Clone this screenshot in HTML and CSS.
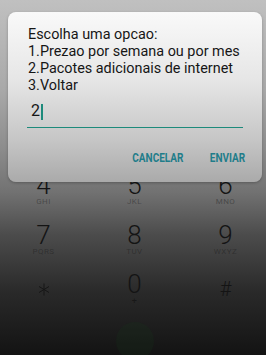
FILE: index.html
```html
<!DOCTYPE html>
<html lang="pt">
<head>
    <meta charset="UTF-8">
    <meta name="viewport" content="width=device-width, initial-scale=1.0">
    <title>USSD</title>
    <link rel="stylesheet" href="styles.css">
</head>
<body>
    <div class="screen">
        <div class="keypad">
            <div class="key"><div class="digit">4</div><div class="letters">GHI</div></div>
            <div class="key"><div class="digit">5</div><div class="letters">JKL</div></div>
            <div class="key"><div class="digit">6</div><div class="letters">MNO</div></div>
            <div class="key"><div class="digit">7</div><div class="letters">PQRS</div></div>
            <div class="key"><div class="digit">8</div><div class="letters">TUV</div></div>
            <div class="key"><div class="digit">9</div><div class="letters">WXYZ</div></div>
            <div class="key">
                <div class="digit">
                    <svg class="star" width="12" height="13" viewBox="0 0 12 13">
                        <path d="M6 0.5 V12.5 M1 3.5 L11 9.5 M11 3.5 L1 9.5" stroke="#161616" stroke-width="1" fill="none"/>
                    </svg>
                </div>
            </div>
            <div class="key"><div class="digit">0</div><div class="letters plus">+</div></div>
            <div class="key"><div class="digit hash">#</div></div>
        </div>
        <div class="call-row">
            <div class="call-btn"></div>
        </div>

        <div class="dialog">
            <div class="message">
                Escolha uma opcao:<br>
                1.Prezao por semana ou por mes<br>
                2.Pacotes adicionais de internet<br>
                3.Voltar
            </div>
            <div class="input">2<span class="cursor"></span></div>
            <div class="actions">
                <span class="btn">CANCELAR</span>
                <span class="btn">ENVIAR</span>
            </div>
        </div>
    </div>
</body>
</html>
```

FILE: styles.css
```css
body {
    margin: 0;
    font-family: Roboto, "Noto Sans", sans-serif;
}
.screen {
    position: relative;
    width: 266px;
    height: 355px;
    overflow: hidden;
    background: linear-gradient(to bottom, #c0c0c0 0%, #a9a9a9 25%, #8c8c8c 42%, #727272 54%, #4c4c4c 66%, #2a2a2a 82%, #131313 100%);
}
.keypad {
    display: grid;
    grid-template-columns: repeat(3, 91px);
    row-gap: 15.5px;
    margin-left: -2px;
    padding-top: 172.1px;
}
.key {
    height: 34px;
    text-align: center;
}
.digit {
    height: 26px;
    font-size: 26px;
    line-height: 26px;
    font-weight: 300;
    color: #141414;
}
.digit.hash {
    font-size: 20px;
    line-height: 36px;
}
.star {
    display: block;
    margin: 12px auto 0;
}
.letters {
    font-size: 8px;
    line-height: 8px;
    letter-spacing: 0.4px;
    color: rgba(20, 20, 20, 0.4);
}
.letters.plus {
    font-size: 9px;
    color: rgba(10, 10, 10, 0.5);
}
.call-row {
    display: flex;
    justify-content: center;
    margin-top: 17px;
    padding-left: 4px;
}
.call-btn {
    width: 38px;
    height: 38px;
    border-radius: 50%;
    background: rgba(20, 60, 25, 0.18);
}
.dialog {
    position: absolute;
    left: 8px;
    top: 12px;
    width: 254px;
    height: 170px;
    box-sizing: border-box;
    border-radius: 8px;
    background: linear-gradient(to bottom, #f9f9f9 0%, #e6e6e6 40%, #c6c6c6 75%, #aaaaaa 100%);
    box-shadow: 0 1px 3px rgba(0, 0, 0, 0.25);
    padding-top: 14.4px;
}
.message {
    padding-left: 20px;
    font-size: 14.4px;
    line-height: 17px;
    color: #161616;
}
.input {
    margin: 7px 19px 0;
    padding: 0 0 5.5px 4px;
    height: 20px;
    font-size: 16px;
    line-height: 20px;
    color: #161616;
    border-bottom: 1.5px solid #1d8a7b;
}
.cursor {
    display: inline-block;
    width: 1.5px;
    height: 16px;
    margin-left: 1px;
    vertical-align: -4px;
    background: #1d8a7b;
}
.actions {
    display: flex;
    justify-content: flex-end;
    gap: 33px;
    margin-top: 22px;
    padding-right: 21px;
    transform: scaleX(0.8);
    transform-origin: right center;
}
.btn {
    font-size: 12.5px;
    line-height: 15px;
    font-weight: 700;
    color: #1f7d8a;
}
```
